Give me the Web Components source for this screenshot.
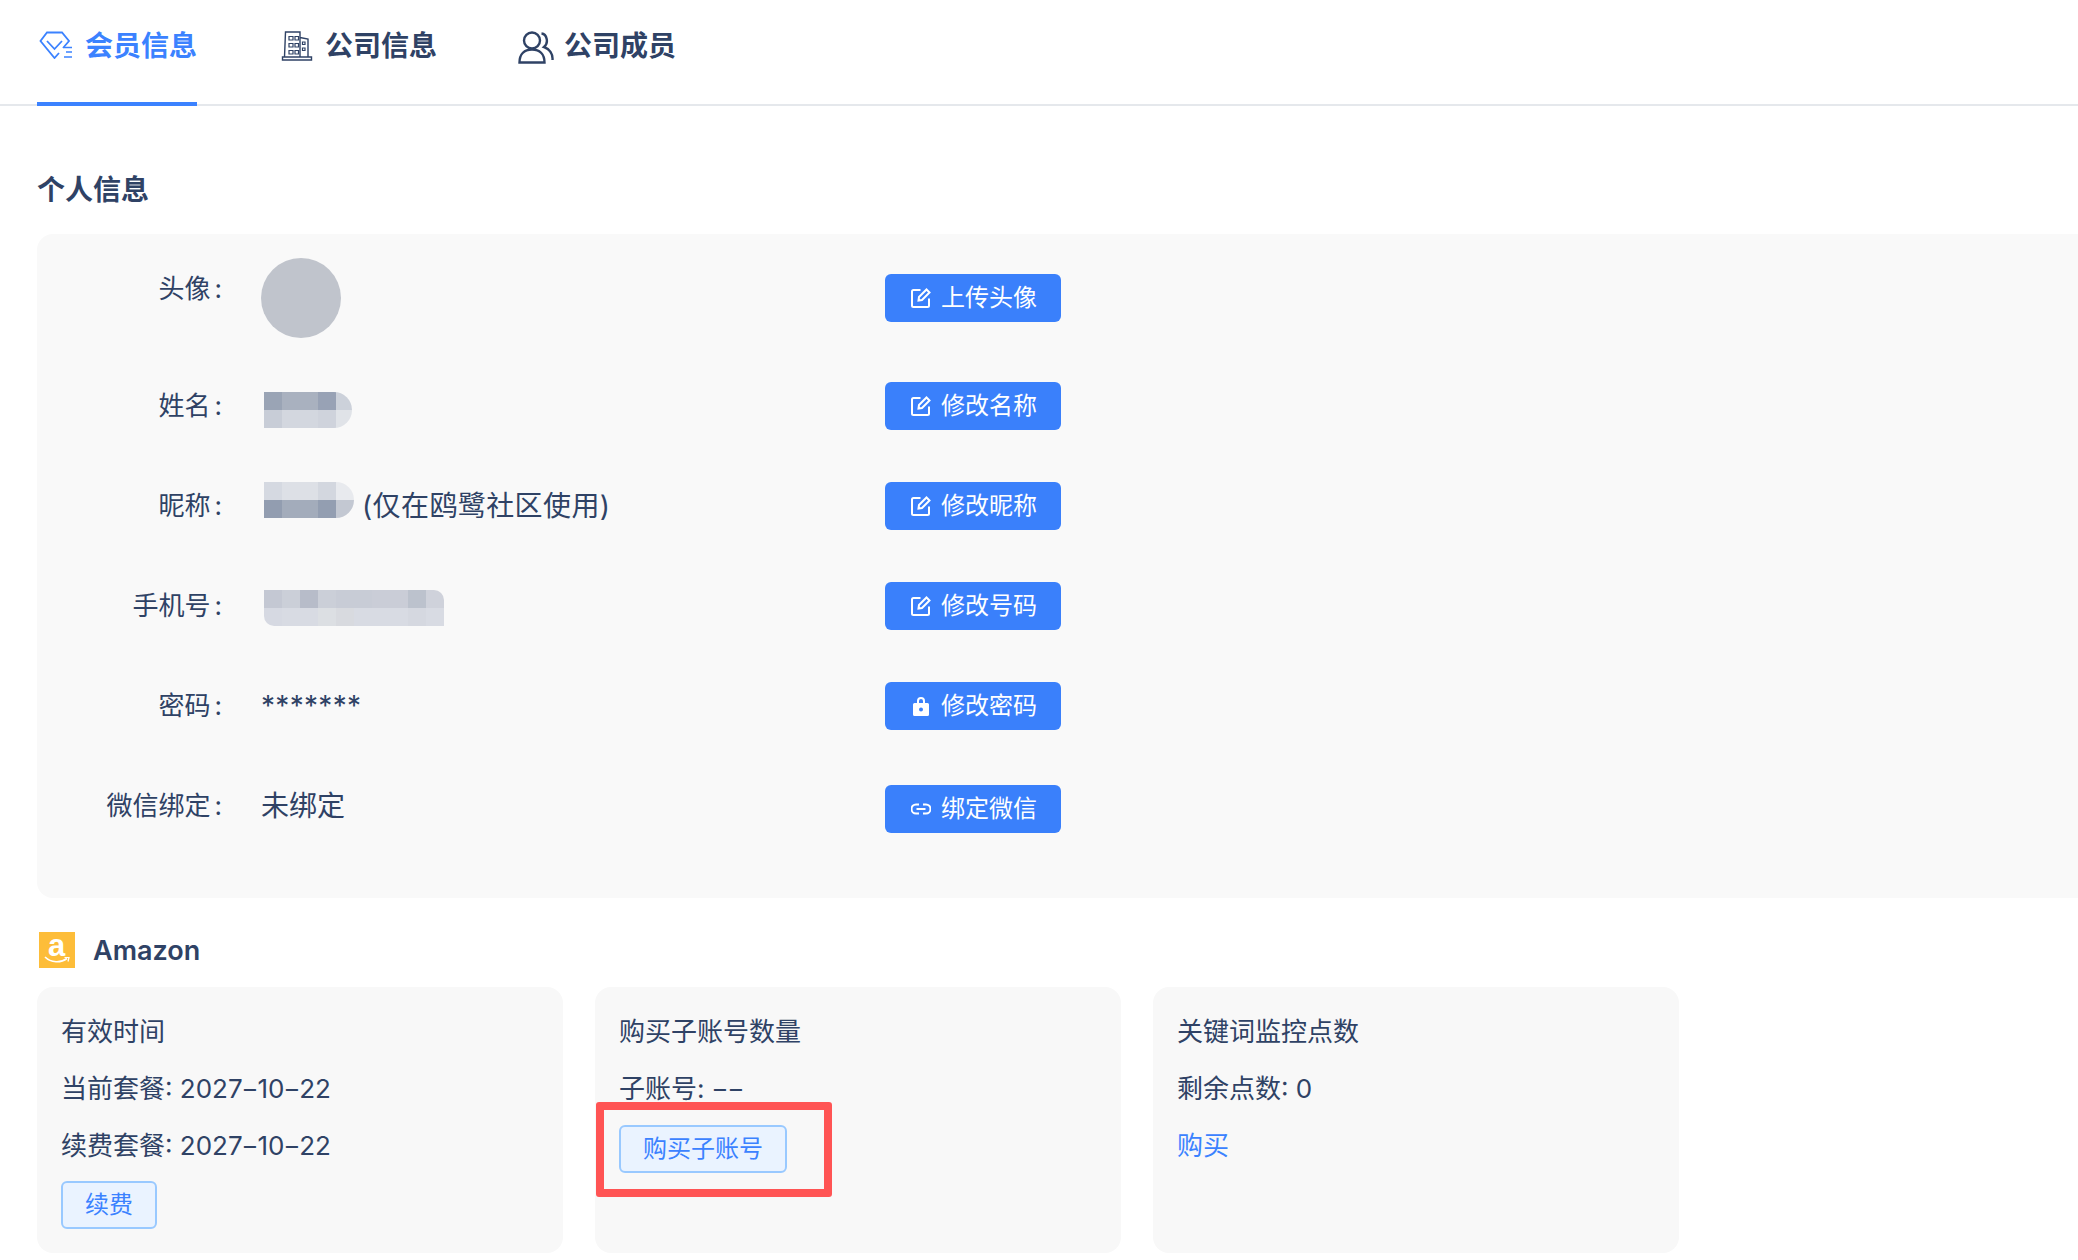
<!DOCTYPE html>
<html lang="zh">
<head>
<meta charset="utf-8">
<title>会员信息</title>
<style>
  html, body { margin: 0; background: #fff; overflow: hidden; }
  body { font-family: Inter, "Noto Sans CJK SC", sans-serif; color: #2f4265; }
</style>
</head>
<body>
<account-page>
  <tab-bar>
    <tab-item active>
      <svg slot="icon" width="33" height="28" viewBox="0 0 33 28" fill="none" stroke="#3b82ff" stroke-width="1.8"><path d="M24 17L30 10L23 1.500H8L1.500 10L15.500 27L20 22"/><path d="M8 10L15.500 18L23 10"/><path d="M25 16.500H33M27 21H33M25 26H33" stroke-width="1.600"/></svg>
      会员信息
    </tab-item>
    <tab-item>
      <svg slot="icon" width="32" height="30" viewBox="0 0 32 30" fill="none" stroke="#2f4265" stroke-width="1.400" style="margin-right:-1px"><path d="M1.500 26H30.500V29H1.500Z M3.500 26L4.500 1H19V26M19 6.500L27 8V26"/><path d="M8 5.500h4v3.500h-4zM14 5.500h3.500v3.500h-3.500zM8 12.500h4v3.500h-4zM14 12.500h3.500v3.500h-3.500zM8 19.500h4v3.500h-4zM14 19.500h3.500v3.500h-3.500zM21.500 11h2.500v2.500h-2.500zM21.500 17h2.500v2.500h-2.500z" stroke-width="1.200"/></svg>
      公司信息
    </tab-item>
    <tab-item style="margin-left:-3px">
      <svg slot="icon" width="36" height="33" viewBox="0 0 36 33" fill="none" stroke="#2f4265" stroke-width="2.400" style="margin-right:-3px"><circle cx="14" cy="9.500" r="8"/><path d="M1.500 31.500C1.500 23 6.500 18.500 14 18.500C21.500 18.500 26.500 23 26.500 31.500Z"/><path d="M23.500 2.500C29 3 31 12 26 16C31.500 18 35 23 34.500 29"/></svg>
      公司成员
    </tab-item>
  </tab-bar>

  <section-title>个人信息</section-title>

  <info-panel>
    <info-row label="头像" top>
      <user-avatar></user-avatar>
      <action-button slot="action">
        <svg slot="icon" width="20" height="20" viewBox="0 0 20 20" fill="none" stroke="#fff" stroke-width="2"><path d="M9.500 2H2.500A1.500 1.500 0 0 0 1 3.500V17.500A1.500 1.500 0 0 0 2.500 19H16.500A1.500 1.500 0 0 0 18 17.500V10.500"/><path d="M7.500 12.500L8 9L15.500 1.500L18.500 4.500L11 12Z"/></svg>
        上传头像
      </action-button>
    </info-row>
    <info-row label="姓名" style="margin-top:44px">
      <mosaic-block width="88" style="margin-top:8px" radius="0 18px 18px 0" top="#9aa4b5 #a9b1bf #a9b1bf #98a2b5 #ccd1da" bottom="#c8cdd7 #d3d7df #d3d7df #cfd3dc #e0e3e8"></mosaic-block>
      <action-button slot="action">
        <svg slot="icon" width="20" height="20" viewBox="0 0 20 20" fill="none" stroke="#fff" stroke-width="2"><path d="M9.500 2H2.500A1.500 1.500 0 0 0 1 3.500V17.500A1.500 1.500 0 0 0 2.500 19H16.500A1.500 1.500 0 0 0 18 17.500V10.500"/><path d="M7.500 12.500L8 9L15.500 1.500L18.500 4.500L11 12Z"/></svg>
        修改名称
      </action-button>
    </info-row>
    <info-row label="昵称" style="margin-top:52px">
      <mosaic-block width="90" style="margin-bottom:12px" radius="0 18px 18px 0" top="#d5d9e1 #dde0e6 #dde0e6 #d3d7df #e8eaee" bottom="#929db0 #a3acbb #a3acbb #939eb1 #c3c8d2"></mosaic-block>
      <span style="margin-left:8px;letter-spacing:0.4px">(仅在鸥鹭社区使用)</span>
      <action-button slot="action">
        <svg slot="icon" width="20" height="20" viewBox="0 0 20 20" fill="none" stroke="#fff" stroke-width="2"><path d="M9.500 2H2.500A1.500 1.500 0 0 0 1 3.500V17.500A1.500 1.500 0 0 0 2.500 19H16.500A1.500 1.500 0 0 0 18 17.500V10.500"/><path d="M7.500 12.500L8 9L15.500 1.500L18.500 4.500L11 12Z"/></svg>
        修改昵称
      </action-button>
    </info-row>
    <info-row label="手机号" style="margin-top:52px">
      <mosaic-block width="180" style="margin-top:4px" radius="0 10px 0 10px" top="#c4c8d3 #cbcfd8 #b7bcc9 #cbcfd8 #c8ccd6 #c8ccd6 #cacdd7 #cacdd7 #bcc2cd #cfd2db" bottom="#d6d9e2 #d8dbe3 #d8dbe3 #dcdfe3 #d8dadf #d8dbe3 #d8dbe3 #d8dbe3 #d5d8e0 #d8dbe3"></mosaic-block>
      <action-button slot="action">
        <svg slot="icon" width="20" height="20" viewBox="0 0 20 20" fill="none" stroke="#fff" stroke-width="2"><path d="M9.500 2H2.500A1.500 1.500 0 0 0 1 3.500V17.500A1.500 1.500 0 0 0 2.500 19H16.500A1.500 1.500 0 0 0 18 17.500V10.500"/><path d="M7.500 12.500L8 9L15.500 1.500L18.500 4.500L11 12Z"/></svg>
        修改号码
      </action-button>
    </info-row>
    <info-row label="密码" style="margin-top:52px">
      <span style="letter-spacing:0.3px">*******</span>
      <action-button slot="action">
        <svg slot="icon" width="20" height="22" viewBox="0 0 20 22"><path fill="#fff" fill-rule="evenodd" d="M6 8V6a4 4 0 0 1 8 0V8H16.500A1.500 1.500 0 0 1 18 9.500V19.500A1.500 1.500 0 0 1 16.500 21H3.500A1.500 1.500 0 0 1 2 19.500V9.500A1.500 1.500 0 0 1 3.500 8ZM8 8H12V6a2 2 0 0 0-4 0ZM10 12.500a2 2 0 1 0 0 4a2 2 0 0 0 0-4Z"/></svg>
        修改密码
      </action-button>
    </info-row>
    <info-row label="微信绑定" raised style="margin-top:55px">
      <span>未绑定</span>
      <action-button slot="action">
        <svg slot="icon" width="20" height="20" viewBox="0 0 20 20" fill="none" stroke="#fff" stroke-width="2"><path d="M8 5.500H5a4.500 4.500 0 0 0 0 9H8M12 5.500H15a4.500 4.500 0 0 1 0 9H12M5.500 10H14.500"/></svg>
        绑定微信
      </action-button>
    </info-row>
  </info-panel>

  <brand-heading>Amazon</brand-heading>

  <card-row>
    <plan-card>
      <h3>有效时间</h3>
      <p>当前套餐: 2027<wide-dash>-</wide-dash>10<wide-dash>-</wide-dash>22</p>
      <p>续费套餐: 2027<wide-dash>-</wide-dash>10<wide-dash>-</wide-dash>22</p>
      <light-button style="margin-top:-1px">续费</light-button>
    </plan-card>
    <plan-card>
      <h3>购买子账号数量</h3>
      <p>子账号: <wide-dash style="margin:0 2px">-</wide-dash><wide-dash style="margin:0 2px">-</wide-dash></p>
      <light-button>购买子账号</light-button>
      <red-mark></red-mark>
    </plan-card>
    <plan-card>
      <h3>关键词监控点数</h3>
      <p>剩余点数: 0</p>
      <a href="#">购买</a>
    </plan-card>
  </card-row>
</account-page>

<script>
class AccountPage extends HTMLElement {
  constructor() {
    super();
    this.attachShadow({ mode: 'open' }).innerHTML = `
      <style>
        :host { display: block; height: 1260px; overflow: hidden; }
      </style>
      <slot></slot>
    `;
  }
}

class TabBar extends HTMLElement {
  constructor() {
    super();
    this.attachShadow({ mode: 'open' }).innerHTML = `
      <style>
        :host {
          display: flex;
          gap: 84px;
          height: 104px;
          padding-left: 37px;
          border-bottom: 2px solid #e5e8ec;
        }
      </style>
      <slot></slot>
    `;
  }
}

class TabItem extends HTMLElement {
  constructor() {
    super();
    this.attachShadow({ mode: 'open' }).innerHTML = `
      <style>
        :host {
          display: flex;
          align-items: flex-start;
          gap: 13px;
          height: 102px;
          font-size: 28px;
          line-height: 40px;
          font-weight: 700;
          color: #2f4265;
          padding-top: 26px;
          box-sizing: border-box;
        }
        :host([active]) {
          color: #3b82ff;
          padding-left: 2px;
          height: 106px;
          border-bottom: 4px solid #3b82ff;
        }
        ::slotted(svg) { margin-top: 5px; }
      </style>
      <slot name="icon"></slot><slot></slot>
    `;
  }
}

class SectionTitle extends HTMLElement {
  constructor() {
    super();
    this.attachShadow({ mode: 'open' }).innerHTML = `
      <style>
        :host {
          display: block;
          margin: 64px 0 24px 37px;
          font-size: 28px;
          line-height: 40px;
          font-weight: 600;
        }
      </style>
      <slot></slot>
    `;
  }
}

class InfoPanel extends HTMLElement {
  constructor() {
    super();
    this.attachShadow({ mode: 'open' }).innerHTML = `
      <style>
        :host {
          display: block;
          box-sizing: border-box;
          height: 664px;
          margin: 0 -40px 0 37px;
          padding-top: 24px;
          background: #f9f9f9;
          border-radius: 16px;
        }
      </style>
      <slot></slot>
    `;
  }
}

class InfoRow extends HTMLElement {
  constructor() {
    super();
    this.attachShadow({ mode: 'open' }).innerHTML = `
      <style>
        :host {
          display: grid;
          grid-template-columns: 185px 585px 176px;
          column-gap: 39px;
          align-items: center;
        }
        .label {
          text-align: right;
          font-size: 26px;
          line-height: 40px;
        }
        .colon { margin-left: 4px; }
        :host([top]) .label { align-self: start; margin-top: 11px; }
        :host([raised]) .label, :host([raised]) .value { margin-bottom: 6px; }
        .value {
          display: flex;
          align-items: center;
          font-size: 28px;
          line-height: 40px;
        }
      </style>
      <div class="label"><span class="name"></span><span class="colon">:</span></div>
      <div class="value"><slot></slot></div>
      <div><slot name="action"></slot></div>
    `;
    this.shadowRoot.querySelector('.name').textContent = this.getAttribute('label');
  }
}

class UserAvatar extends HTMLElement {
  constructor() {
    super();
    this.attachShadow({ mode: 'open' }).innerHTML = `
      <style>
        :host {
          display: block;
          width: 80px;
          height: 80px;
          border-radius: 50%;
          background: #c0c4cc;
        }
      </style>
    `;
  }
}

class MosaicBlock extends HTMLElement {
  constructor() {
    super();
    const shadow = this.attachShadow({ mode: 'open' });
    const cols = this.getAttribute('top').split(' ').length;
    const cells = [...this.getAttribute('top').split(' '), ...this.getAttribute('bottom').split(' ')]
      .map(c => `<i style="background:${c}"></i>`).join('');
    shadow.innerHTML = `
      <style>
        :host {
          display: grid;
          grid-template-columns: repeat(${cols}, 18px);
          grid-auto-rows: 18px;
          flex: none;
          width: ${this.getAttribute('width')}px;
          margin-left: 3px;
          overflow: hidden;
          border-radius: ${this.getAttribute('radius')};
        }
      </style>
      ${cells}
    `;
  }
}

class ActionButton extends HTMLElement {
  constructor() {
    super();
    this.attachShadow({ mode: 'open' }).innerHTML = `
      <style>
        :host {
          display: flex;
          align-items: center;
          justify-content: center;
          gap: 10px;
          box-sizing: border-box;
          width: 176px;
          height: 48px;
          padding-left: 2px;
          border-radius: 6px;
          background: #3a80fb;
          color: #fff;
          font-size: 24px;
          line-height: 1;
        }
      </style>
      <slot name="icon"></slot><slot></slot>
    `;
  }
}

class BrandHeading extends HTMLElement {
  constructor() {
    super();
    this.attachShadow({ mode: 'open' }).innerHTML = `
      <style>
        :host {
          display: flex;
          align-items: center;
          gap: 18px;
          height: 36px;
          margin: 34px 0 19px 39px;
          font-size: 27px;
          font-weight: 600;
        }
        svg { display: block; overflow: visible; }
        text { font-family: "Liberation Sans", sans-serif; }
      </style>
      <svg width="36" height="36" viewBox="0 0 36 36">
        <rect width="36" height="36" fill="#fdbd39"/>
        <text x="17.500" y="24" text-anchor="middle" font-size="31" font-weight="700" fill="#fff">a</text>
        <path d="M6 25C12 31 22 31 28 26.500" fill="none" stroke="#fff" stroke-width="1.600"/>
        <path d="M25.500 25.500H30L29 29.500" fill="none" stroke="#fff" stroke-width="1.200"/>
      </svg>
      <slot></slot>
    `;
  }
}

class CardRow extends HTMLElement {
  constructor() {
    super();
    this.attachShadow({ mode: 'open' }).innerHTML = `
      <style>
        :host {
          display: flex;
          gap: 32px;
          margin-left: 37px;
        }
      </style>
      <slot></slot>
    `;
  }
}

class PlanCard extends HTMLElement {
  constructor() {
    super();
    this.attachShadow({ mode: 'open' }).innerHTML = `
      <style>
        :host {
          display: block;
          position: relative;
          box-sizing: border-box;
          width: 526px;
          height: 266px;
          padding: 24px;
          background: #f8f8f8;
          border-radius: 16px;
          font-size: 26px;
          line-height: 41px;
        }
        ::slotted(h3), ::slotted(p) {
          margin: 0 0 16px;
          font: inherit;
        }
        ::slotted(a) {
          color: #3b82ff;
          text-decoration: none;
        }
      </style>
      <slot></slot>
    `;
  }
}

class WideDash extends HTMLElement {
  constructor() {
    super();
    this.attachShadow({ mode: 'open' }).innerHTML = `
      <style>
        :host {
          display: inline-block;
          margin: 0 1.400px;
          transform: scaleX(1.45);
        }
      </style>
      <slot></slot>
    `;
  }
}

class LightButton extends HTMLElement {
  constructor() {
    super();
    this.attachShadow({ mode: 'open' }).innerHTML = `
      <style>
        :host {
          display: inline-block;
          box-sizing: border-box;
          height: 48px;
          padding: 0 22px;
          border: 2px solid #99c9ff;
          border-radius: 6px;
          background: #eaf3ff;
          color: #3b82ff;
          font-size: 24px;
          line-height: 44px;
        }
      </style>
      <slot></slot>
    `;
  }
}

class RedMark extends HTMLElement {
  constructor() {
    super();
    this.attachShadow({ mode: 'open' }).innerHTML = `
      <style>
        :host {
          position: absolute;
          left: 1px;
          top: 115px;
          box-sizing: border-box;
          width: 236px;
          height: 95px;
          border: 8px solid #ff5454;
          border-radius: 3px;
        }
      </style>
    `;
  }
}

customElements.define('account-page', AccountPage);
customElements.define('tab-bar', TabBar);
customElements.define('tab-item', TabItem);
customElements.define('section-title', SectionTitle);
customElements.define('info-panel', InfoPanel);
customElements.define('info-row', InfoRow);
customElements.define('user-avatar', UserAvatar);
customElements.define('mosaic-block', MosaicBlock);
customElements.define('action-button', ActionButton);
customElements.define('brand-heading', BrandHeading);
customElements.define('card-row', CardRow);
customElements.define('plan-card', PlanCard);
customElements.define('wide-dash', WideDash);
customElements.define('light-button', LightButton);
customElements.define('red-mark', RedMark);
</script>
</body>
</html>
